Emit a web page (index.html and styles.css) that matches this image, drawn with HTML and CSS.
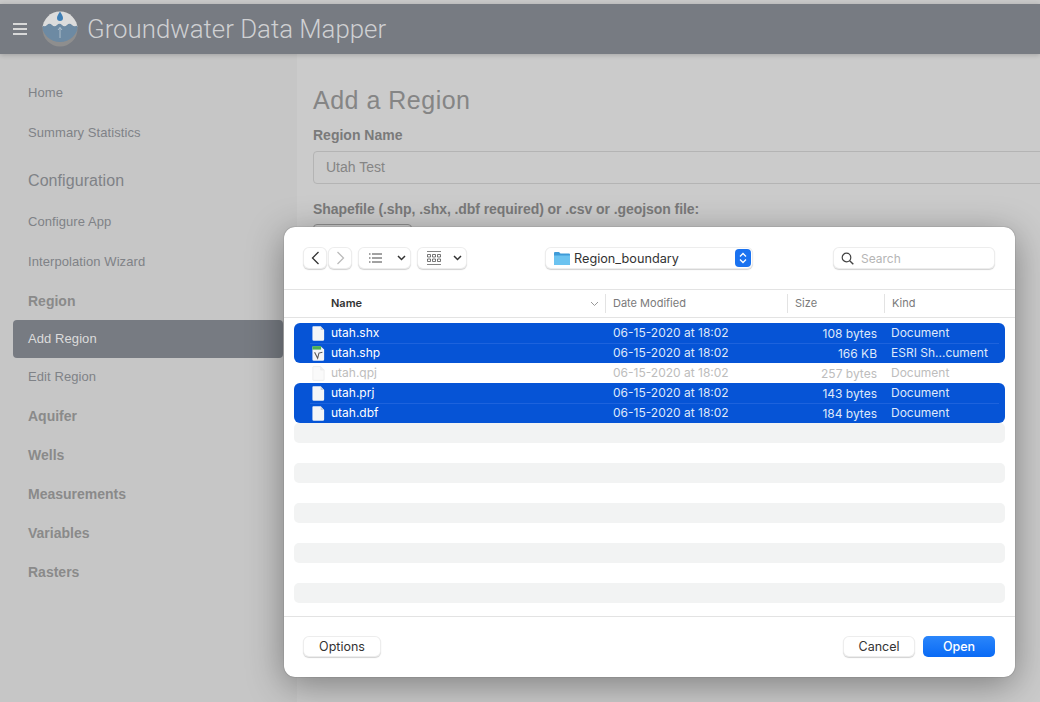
FILE: index.html
```html
<!DOCTYPE html>
<html lang="en">
<head>
    <meta charset="UTF-8">
    <title>Groundwater Data Mapper</title>
    <link rel="stylesheet" href="styles.css">
</head>
<body>
    <div class="top-strip"></div>
    <header class="app-bar">
        <div class="burger"><span></span><span></span><span></span></div>
        <svg class="logo" width="36" height="36" viewBox="0 0 36 36">
            <defs><clipPath id="logoClip"><circle cx="18" cy="18" r="17.5"/></clipPath></defs>
            <g clip-path="url(#logoClip)">
                <rect width="36" height="36" fill="#8e8e8e"/>
                <rect width="36" height="16" fill="#dcdcdc"/>
                <path d="M0 14 q2.500 2.500 5 0 t5 0 t5 0 t5 0 t5 0 t5 0 t6 0 A18 17 0 0 1 0 14 Z" fill="#6d8aa3"/>
            </g>
            <path d="M18 .5 C16.500 3 15 5 15 7 a3 3 0 0 0 6 0 C21 5 19.500 3 18 .5 Z" fill="#3f7fb5"/>
            <path d="M18 27 V16.500 M16 19 l2 -2.500 l2 2.500" fill="none" stroke="#c9d3da" stroke-width=".7"/>
        </svg>
        <span class="app-title">Groundwater Data Mapper</span>
    </header>

    <div class="app-body">
        <nav class="sidebar">
            <a class="nav-link">Home</a>
            <a class="nav-link">Summary Statistics</a>
            <div class="nav-title">Configuration</div>
            <a class="nav-link">Configure App</a>
            <a class="nav-link">Interpolation Wizard</a>
            <a class="nav-link nav-bold nav-region">Region</a>
            <a class="nav-link nav-active">Add Region</a>
            <a class="nav-link nav-edit">Edit Region</a>
            <a class="nav-link nav-bold nav-aquifer">Aquifer</a>
            <a class="nav-link nav-bold nav-short">Wells</a>
            <a class="nav-link nav-bold nav-short">Measurements</a>
            <a class="nav-link nav-bold nav-short">Variables</a>
            <a class="nav-link nav-bold nav-short">Rasters</a>
        </nav>
        <main class="content">
            <h2>Add a Region</h2>
            <label class="field-label">Region Name</label>
            <div class="text-input">Utah Test</div>
            <label class="field-label label-long">Shapefile (.shp, .shx, .dbf required) or .csv or .geojson file:</label>
            <div class="file-btn"></div>
        </main>
    </div>

    <!-- file picker -->
    <div class="dialog">
        <svg width="0" height="0" class="defs">
            <symbol id="doc" viewBox="0 0 15 17">
                <path d="M1.500 0 H10 L14 4.500 V15.500 a1.500 1.500 0 0 1 -1.500 1.500 H2 a1.500 1.500 0 0 1 -1.500 -1.500 V1 a1 1 0 0 1 1 -1 Z" fill="#f4f5f7"/>
                <path d="M10 0 V4.500 H14 Z" fill="#c9ced8"/>
            </symbol>
            <symbol id="docGhost" viewBox="0 0 15 17">
                <path d="M1.500 .5 H10 L14 4.500 V15.500 a1 1 0 0 1 -1 1 H2 a1 1 0 0 1 -1 -1 V1.500 a1 1 0 0 1 .5 -1 Z" fill="#fafafa" stroke="#ececec"/>
                <path d="M10 .5 V4.500 H14" fill="#f0f0f0" stroke="#ececec"/>
            </symbol>
        </svg>

        <div class="toolbar">
            <div class="btn-pair">
                <button class="tool-btn nav-btn">
                    <svg width="9" height="14" viewBox="0 0 9 14"><path d="M7.500 1 L1.500 7 L7.500 13" fill="none" stroke="#333" stroke-width="1.300"/></svg>
                </button>
                <button class="tool-btn nav-btn">
                    <svg width="9" height="14" viewBox="0 0 9 14"><path d="M1.500 1 L7.500 7 L1.500 13" fill="none" stroke="#bbb" stroke-width="1.300"/></svg>
                </button>
            </div>
            <button class="tool-btn view-list">
                <svg width="13" height="10" viewBox="0 0 13 10"><path d="M0 1 H1.500 M3 1 H13 M0 5 H1.500 M3 5 H13 M0 9 H1.500 M3 9 H13" stroke="#444" stroke-width="1"/></svg>
                <svg class="chev" width="9" height="6" viewBox="0 0 9 6"><path d="M1 1 L4.500 4.500 L8 1" fill="none" stroke="#333" stroke-width="1.500"/></svg>
            </button>
            <button class="tool-btn view-grid">
                <svg width="14" height="14" viewBox="0 0 14 14"><path d="M0 .5 H14 M0 13.500 H14" stroke="#666" stroke-width=".8"/><path d="M.5 3.500 h3 v2.500 h-3 Z M5.500 3.500 h3 v2.500 h-3 Z M10.500 3.500 h3 v2.500 h-3 Z M.5 8 h3 v2.500 h-3 Z M5.500 8 h3 v2.500 h-3 Z M10.500 8 h3 v2.500 h-3 Z" fill="none" stroke="#555" stroke-width=".8"/></svg>
                <svg class="chev" width="9" height="6" viewBox="0 0 9 6"><path d="M1 1 L4.500 4.500 L8 1" fill="none" stroke="#333" stroke-width="1.500"/></svg>
            </button>
            <button class="tool-btn path-popup">
                <svg width="16" height="14" viewBox="0 0 16 14"><path d="M0 2 a1 1 0 0 1 1 -1 H5 L6.500 2.500 H15 a1 1 0 0 1 1 1 V13 a1 1 0 0 1 -1 1 H1 a1 1 0 0 1 -1 -1 Z" fill="#3f9bd8"/><path d="M0 4.500 H16 V13 a1 1 0 0 1 -1 1 H1 a1 1 0 0 1 -1 -1 Z" fill="#6cc3f0"/></svg>
                <span class="path-name">Region_boundary</span>
                <span class="stepper">
                    <svg width="8" height="12" viewBox="0 0 8 12"><path d="M1 4.500 L4 1.500 L7 4.500 M1 7.500 L4 10.500 L7 7.500" fill="none" stroke="#fff" stroke-width="1.300"/></svg>
                </span>
            </button>
            <div class="search-box">
                <svg width="13" height="13" viewBox="0 0 13 13"><circle cx="5.500" cy="5.500" r="4.300" fill="none" stroke="#444" stroke-width="1.200"/><path d="M8.700 8.700 L12.300 12.300" stroke="#444" stroke-width="1.400"/></svg>
                <span>Search</span>
            </div>
        </div>

        <div class="col-head">
            <div class="col col-name">Name
                <svg width="9" height="6" viewBox="0 0 9 6"><path d="M1 1 L4.500 4.500 L8 1" fill="none" stroke="#999" stroke-width="1"/></svg>
            </div>
            <div class="col col-date">Date Modified</div>
            <div class="col col-size">Size</div>
            <div class="col col-kind">Kind</div>
        </div>

        <div class="file-list">
            <div class="sel-group">
                <div class="file-row">
                    <svg class="file-icon" width="13" height="15"><use href="#doc"/></svg>
                    <span class="file-name">utah.shx</span><span>06-15-2020 at 18:02</span><span class="file-size">108 bytes</span><span class="file-kind">Document</span>
                </div>
                <div class="file-row">
                    <svg class="file-icon" width="13" height="15" viewBox="0 0 15 17">
                        <path d="M1.500 0 H10 L14 4 V15.500 a1.500 1.500 0 0 1 -1.500 1.500 H2 a1.500 1.500 0 0 1 -1.500 -1.500 V1 a1 1 0 0 1 1 -1 Z" fill="#f4f5f7"/>
                        <rect x=".5" y="0" width="10" height="4" fill="#4caf50"/>
                        <path d="M3 7 L6.500 14 L8 8 L12 7" fill="none" stroke="#555" stroke-width="1.200"/>
                    </svg>
                    <span class="file-name">utah.shp</span><span>06-15-2020 at 18:02</span><span class="file-size">166 KB</span><span class="file-kind">ESRI Sh...cument</span>
                </div>
            </div>
            <div class="file-row file-off">
                <svg class="file-icon" width="13" height="15"><use href="#docGhost"/></svg>
                <span class="file-name">utah.qpj</span><span>06-15-2020 at 18:02</span><span class="file-size">257 bytes</span><span class="file-kind">Document</span>
            </div>
            <div class="sel-group">
                <div class="file-row">
                    <svg class="file-icon" width="13" height="15"><use href="#doc"/></svg>
                    <span class="file-name">utah.prj</span><span>06-15-2020 at 18:02</span><span class="file-size">143 bytes</span><span class="file-kind">Document</span>
                </div>
                <div class="file-row">
                    <svg class="file-icon" width="13" height="15"><use href="#doc"/></svg>
                    <span class="file-name">utah.dbf</span><span>06-15-2020 at 18:02</span><span class="file-size">184 bytes</span><span class="file-kind">Document</span>
                </div>
            </div>
            <div class="stripe"></div><div class="gap"></div>
            <div class="stripe"></div><div class="gap"></div>
            <div class="stripe"></div><div class="gap"></div>
            <div class="stripe"></div><div class="gap"></div>
            <div class="stripe"></div>
        </div>

        <div class="dialog-foot">
            <button class="tool-btn foot-btn btn-options">Options</button>
            <button class="tool-btn foot-btn btn-cancel">Cancel</button>
            <button class="foot-btn btn-open">Open</button>
        </div>
    </div>
</body>
</html>
```

FILE: styles.css
```css
/* page behind the dialog */
html, body {
    margin: 0;
    height: 702px;
    overflow: hidden;
}

body {
    position: relative;
    display: flex;
    flex-direction: column;
    background-color: #cbcbcb;
    font-family: "Liberation Sans", Arial, sans-serif;
    color: #7f7f7f;
}

.top-strip {
    height: 4px;
    background-color: #c9c9c9;
}

.app-bar {
    height: 50px;
    flex-shrink: 0;
    display: flex;
    align-items: center;
    padding-left: 13px;
    background-color: #777b82;
    box-shadow: 0 1px 5px rgba(0, 0, 0, 0.2);
    position: relative;
}

.burger {
    width: 14px;
    display: flex;
    flex-direction: column;
    gap: 3px;
}

.burger span {
    height: 2px;
    background-color: #d8d8d8;
}

.logo {
    margin-left: 15px;
}

.app-title {
    margin-left: 9px;
    font-family: Roboto, sans-serif;
    font-weight: 300;
    font-size: 25.800px;
    color: #cfd0d2;
}

.app-body {
    flex: 1;
    display: flex;
}

.sidebar {
    width: 297px;
    box-sizing: border-box;
    padding: 19px 14px 0 13px;
    background-color: #c6c6c6;
    font-size: 13px;
    letter-spacing: 0.08px;
}

.nav-link {
    display: block;
    height: 40px;
    line-height: 40px;
    padding-left: 15px;
    color: #7f8287;
}

.nav-title {
    height: 49px;
    line-height: 55px;
    padding-left: 15px;
    font-size: 16px;
    color: #7f8287;
}

.nav-bold {
    font-size: 14px;
    font-weight: bold;
    height: 38px;
    line-height: 40px;
    letter-spacing: 0;
    color: #8a8a8a;
}

.nav-region {
    line-height: 38px;
}

.nav-aquifer {
    height: 40px;
}

.nav-short {
    height: 39px;
    line-height: 39px;
}

.nav-active {
    height: 38px;
    line-height: 38px;
    border-radius: 4px;
    background-color: #777b82;
    color: #dcdcdc;
}

.nav-edit {
    height: 38px;
    line-height: 38px;
}

.content {
    flex: 1;
    padding: 32px 0 0 16px;
}

.content h2 {
    margin: 0 0 12px;
    font-size: 25px;
    line-height: 28px;
    font-weight: normal;
    letter-spacing: 0.5px;
    color: #858585;
}

.field-label {
    display: block;
    font-size: 14px;
    font-weight: bold;
    line-height: 18px;
    color: #7a7a7a;
}

.label-long {
    letter-spacing: -0.07px;
}

.text-input {
    height: 31px;
    line-height: 31px;
    margin: 7px -20px 16px 0;
    padding-left: 12px;
    border: 1px solid #b4b4b4;
    border-radius: 4px;
    font-size: 14px;
    color: #858585;
}

.file-btn {
    width: 97px;
    height: 30px;
    margin-top: 6px;
    border: 1px solid #8f8f8f;
    border-radius: 4px;
}

/* file picker dialog */
.dialog {
    position: absolute;
    left: 284px;
    top: 227px;
    width: 731px;
    height: 450px;
    display: flex;
    flex-direction: column;
    border-radius: 11px;
    background-color: #fff;
    box-shadow: 0 0 1px rgba(0, 0, 0, 0.6), 0 8px 36px rgba(0, 0, 0, 0.38);
    font-family: Inter, "Liberation Sans", sans-serif;
    font-size: 12px;
    color: #333;
    overflow: hidden;
}

.defs {
    position: absolute;
}

.toolbar {
    height: 63px;
    flex-shrink: 0;
    box-sizing: border-box;
    display: flex;
    align-items: flex-start;
    padding: 20px 0 0 19px;
    border-bottom: 1px solid #e3e3e3;
}

.tool-btn {
    height: 22px;
    padding: 0;
    display: flex;
    align-items: center;
    box-sizing: border-box;
    border: none;
    border-radius: 6px;
    background-color: #fff;
    box-shadow: inset 0 0 0 1px rgba(0, 0, 0, 0.07), 0 1px 1px rgba(0, 0, 0, 0.18);
    font-family: inherit;
    font-size: 12px;
    color: #333;
}

.btn-pair {
    display: flex;
    gap: 1px;
}

.nav-btn {
    width: 24px;
    justify-content: center;
}

.view-list {
    width: 53px;
    margin-left: 6px;
    padding: 0 5px 0 11px;
    justify-content: space-between;
}

.view-grid {
    width: 50px;
    margin-left: 6px;
    padding: 0 5px 0 10px;
    justify-content: space-between;
}

.path-popup {
    width: 208px;
    margin-left: 78px;
    padding: 0 2px 0 9px;
}

.path-name {
    flex: 1;
    margin-left: 4px;
    text-align: left;
    font-size: 12.700px;
    white-space: nowrap;
}

.stepper {
    width: 16px;
    height: 18px;
    border-radius: 4px;
    display: flex;
    align-items: center;
    justify-content: center;
    background-color: #1a72f0;
}

.search-box {
    width: 162px;
    height: 22px;
    margin-left: 80px;
    padding-left: 8px;
    box-sizing: border-box;
    display: flex;
    align-items: center;
    gap: 7px;
    border-radius: 6px;
    box-shadow: inset 0 0 0 1px rgba(0, 0, 0, 0.07), 0 1px 1px rgba(0, 0, 0, 0.18);
    color: #b5b5b5;
}

.col-head {
    height: 28px;
    flex-shrink: 0;
    box-sizing: border-box;
    display: flex;
    align-items: center;
    border-bottom: 1px solid #e3e3e3;
    font-size: 11px;
    color: #7a7a7a;
}

.col {
    height: 19px;
    line-height: 19px;
    box-sizing: border-box;
    padding-left: 7px;
    border-left: 1px solid #e3e3e3;
}

.col-name {
    width: 281px;
    margin-left: 40px;
    padding-right: 6px;
    display: flex;
    align-items: center;
    justify-content: space-between;
    border-left: none;
    font-weight: 600;
    color: #333;
}

.col-date {
    width: 182px;
}

.col-size {
    width: 97px;
}

.col-kind {
    width: 100px;
}

.file-list {
    flex: 1;
    box-sizing: border-box;
    padding: 5px 10px 0;
}

.sel-group {
    border-radius: 6px;
    background-color: #0654d6;
    color: #dfe8fa;
}

.file-row {
    height: 20px;
    box-sizing: border-box;
    padding-bottom: 2px;
    display: grid;
    grid-template-columns: 37px 282px 180px 84px 1fr;
    align-items: center;
    position: relative;
}

.sel-group .file-row + .file-row::before {
    content: "";
    position: absolute;
    left: 16px;
    right: 6px;
    top: 0;
    height: 1px;
    background-color: #1d63dd;
}

.file-icon {
    margin: 2px 0 0 18px;
}

.sel-group .file-name {
    color: #fff;
}

.file-size {
    text-align: right;
    margin-top: 2px;
}

.file-kind {
    padding-left: 14px;
}

.file-off {
    color: #bdbdbd;
}

.stripe {
    height: 20px;
    border-radius: 5px;
    background-color: #f2f3f3;
}

.gap {
    height: 20px;
}

.dialog-foot {
    height: 61px;
    flex-shrink: 0;
    box-sizing: border-box;
    display: flex;
    align-items: flex-start;
    padding: 19px 20px 0 19px;
    border-top: 1px solid #e3e3e3;
}

.foot-btn {
    height: 21px;
    justify-content: center;
    font-size: 12.500px;
}

.btn-options {
    width: 78px;
}

.btn-cancel {
    width: 72px;
    margin-left: auto;
}

.btn-open {
    width: 72px;
    margin-left: 8px;
    border: none;
    border-radius: 5px;
    background: linear-gradient(#2a86fb, #0a6af5);
    font-family: inherit;
    font-weight: 500;
    color: #fff;
}
```
